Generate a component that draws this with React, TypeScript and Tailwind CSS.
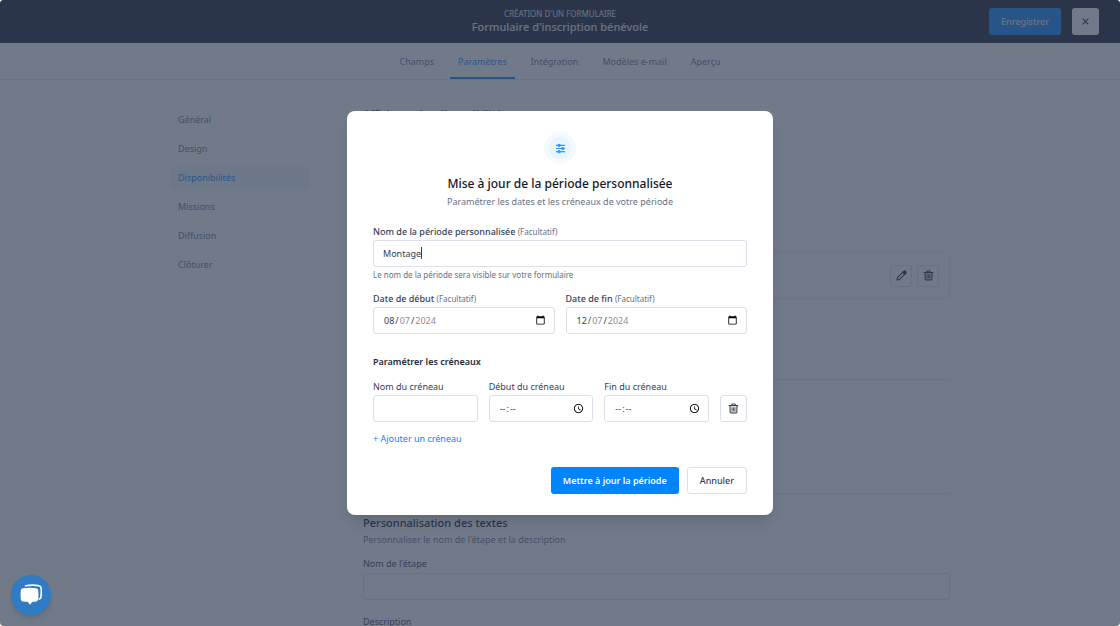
import React, { useState } from 'react';

const tabs = ['Champs', 'Paramètres', 'Intégration', 'Modèles e-mail', 'Aperçu'];
const sections = ['Général', 'Design', 'Disponibilités', 'Missions', 'Diffusion', 'Clôturer'];

const field =
  'h-[27px] w-full min-w-0 rounded-[3px] border border-[#dcdfe8] bg-white pl-[9px] pr-2 text-[9px] text-[#344054] outline-none';
const picker =
  ' [&::-webkit-calendar-picker-indicator]:size-[11px] [&::-webkit-calendar-picker-indicator]:p-0';
const dateField =
  field +
  picker +
  ' [&::-webkit-datetime-edit-day-field]:text-[#8a8d94] [&::-webkit-datetime-edit-year-field]:text-[#8a8d94]';
const timeField = field + picker + ' [&::-webkit-datetime-edit-ampm-field]:hidden';

function TrashIcon() {
  return (
    <svg viewBox="0 0 24 24" className="size-[11px]" fill="none" stroke="currentColor" strokeWidth="2.2" strokeLinecap="round" strokeLinejoin="round" aria-hidden="true">
      <path d="M2.500 5.500h19" />
      <path d="M8 5.500V4C8 2.800 8.700 2 10 2h4c1.300 0 2 .8 2 2v1.500" />
      <path d="M4.500 5.500V19c0 1.700 1.200 3 3 3h9c1.800 0 3-1.300 3-3V5.500" fill="currentColor" fillOpacity="0.2" />
      <path d="M9 10.500v7M12 10.500v7M15 10.500v7" strokeWidth="1.500" />
    </svg>
  );
}

function PencilIcon() {
  return (
    <svg viewBox="0 0 24 24" className="size-[11px]" fill="none" stroke="currentColor" strokeWidth="2.200" strokeLinecap="round" strokeLinejoin="round" aria-hidden="true">
      <path d="M2 22l1.500-6L16.500 3a3.200 3.200 0 0 1 4.500 4.500L8 20.500z" />
      <path d="M14.500 5l4.500 4.500L21 7.500a3.200 3.200 0 0 0-4.500-4.500z" fill="currentColor" />
    </svg>
  );
}

function SlidersIcon() {
  return (
    <svg viewBox="0 0 24 24" className="size-[11px]" fill="none" stroke="currentColor" strokeWidth="2.600" strokeLinecap="round" aria-hidden="true">
      <path d="M3 5h18M3 12h18M3 19h18" />
      <circle cx="9" cy="5" r="2.200" fill="currentColor" />
      <circle cx="17" cy="12" r="2.200" fill="currentColor" />
      <circle cx="9" cy="19" r="2.200" fill="currentColor" />
    </svg>
  );
}

function ChatIcon() {
  return (
    <svg viewBox="0 0 24 24" className="size-6" aria-hidden="true">
      <path d="M6.500 2.800C11 2 16 2 20 2.800c1.200.2 2 1 2.100 2.200.4 3 .3 6.300-.2 9.200-.1.900-.7 1.600-1.600 1.800" fill="none" stroke="#fff" strokeWidth="1.600" strokeLinecap="round" />
      <path d="M3.800 5.200c4-.7 9.400-.7 13.400 0 1.100.2 1.800.9 2 2 .4 3 .4 6.200 0 9.200-.2 1.100-.9 1.800-2 2-1.200.2-2.400.3-3.700.4L11 21.800l-2.500-3c-1.600 0-3.200-.2-4.700-.4-1.100-.2-1.800-.9-2-2-.4-3-.4-6.200 0-9.200.2-1.100.9-1.800 2-2z" fill="#fff" />
    </svg>
  );
}

function Optional() {
  return <span className="text-[8px] font-normal text-[#667085]">(Facultatif)</span>;
}

function PageHeader() {
  return (
    <header className="grid h-[43px] grid-cols-[1fr_auto_1fr] items-center bg-[#11192a] px-[21px]">
      <div className="col-start-2 pb-[2px] text-center text-[#e4e7ec]">
        <p className="text-[8px] leading-3">CRÉATION D'UN FORMULAIRE</p>
        <h1 className="text-[11px] leading-[14px] font-medium">Formulaire d'inscription bénévole</h1>
      </div>
      <div className="flex items-center justify-end gap-[11px]">
        <button type="button" className="h-[27px] rounded-[3px] bg-[#0a84ff] px-3 text-[9px] font-medium text-[#e4e7ec]">
          Enregistrer
        </button>
        <button type="button" aria-label="Fermer" className="flex size-[27px] items-center justify-center rounded-[3px] bg-white text-[#101828]">
          <svg viewBox="0 0 10 10" className="size-[7px]" stroke="currentColor" strokeWidth="1.500" aria-hidden="true">
            <path d="M1 1l8 8M9 1L1 9" />
          </svg>
        </button>
      </div>
    </header>
  );
}

function PageBody() {
  return (
    <div className="mx-auto grid max-w-[780px] grid-cols-[140px_1fr] gap-[53px] pt-[27px]">
      <nav aria-label="Paramètres" className="flex flex-col gap-[5px] pt-px">
        {sections.map((s) => (
          <a
            key={s}
            href="#"
            className={
              s === 'Disponibilités'
                ? 'rounded-[4px] bg-[#f2f9ff] px-2 text-[9px] leading-6 text-[#0a84ff]'
                : 'rounded-[4px] px-2 text-[9px] leading-6 text-[#667085]'
            }
          >
            {s}
          </a>
        ))}
      </nav>
      <main className="min-w-0">
        <h2 className="text-[11px] leading-[14px] font-medium text-[#1d2939]">Affichage des disponibilités</h2>
        <div className="-mx-4 mt-[116px] h-[100px] border-y border-[#f7f8fa] bg-[#fefefe] px-4 pt-[14px]">
          <div className="flex h-[47px] items-center justify-end gap-[5px] rounded-[5px] border border-[#e9ebf0] bg-white px-[10px] text-[#101828]">
            <button type="button" aria-label="Modifier" className="flex size-[22px] items-center justify-center rounded-[3px] border border-[#dcdfe8]">
              <PencilIcon />
            </button>
            <button type="button" aria-label="Supprimer" className="flex size-[22px] items-center justify-center rounded-[3px] border border-[#dcdfe8]">
              <TrashIcon />
            </button>
          </div>
        </div>
        <hr className="mt-[42px] border-[#e4e7ec]" />
        <hr className="mt-[113px] border-[#e4e7ec]" />
        <h2 className="mt-[21px] text-[11px] leading-4 font-medium text-[#101828]">Personnalisation des textes</h2>
        <p className="mt-px text-[9px] leading-4 text-[#667085]">Personnaliser le nom de l'étape et la description</p>
        <label htmlFor="etape" className="mt-2 block text-[9px] leading-4 text-[#344054]">
          Nom de l'étape
        </label>
        <input id="etape" type="text" className={field + ' mt-px'} />
        <label htmlFor="description" className="mt-[14px] block text-[9px] leading-4 text-[#344054]">
          Description
        </label>
        <textarea id="description" className="mt-px h-20 w-full rounded-[3px] border border-[#dcdfe8]" />
      </main>
    </div>
  );
}

function PeriodDialog() {
  const [name, setName] = useState('Montage');
  return (
    <form
      role="dialog"
      aria-modal="true"
      aria-labelledby="dialog-title"
      className="w-full max-w-[426px] rounded-[8px] bg-white px-[26px] py-[21px] text-[9px] text-[#344054] shadow-lg"
    >
      <div className="mx-auto flex size-8 items-center justify-center rounded-full bg-[#f5faff]">
        <div className="flex size-[22px] items-center justify-center rounded-full bg-[#e8f4ff] text-[#2e96ff]">
          <SlidersIcon />
        </div>
      </div>
      <h2 id="dialog-title" className="mt-3 text-center text-[12px] leading-4 font-medium text-[#101828]">
        Mise à jour de la période personnalisée
      </h2>
      <p className="mt-[2px] text-center leading-4 text-[#667085]">Paramétrer les dates et les créneaux de votre période</p>

      <label htmlFor="nom" className="mt-[14px] block leading-4 font-medium">
        Nom de la période personnalisée <Optional />
      </label>
      <div className="relative">
        <input id="nom" type="text" value={name} onChange={(e) => setName(e.target.value)} className={field + ' block'} />
        <span className="absolute top-[7px] left-12 h-3 w-px bg-[#344054]" aria-hidden="true" />
      </div>
      <p className="mt-[2px] text-[8px] leading-3 text-[#667085]">Le nom de la période sera visible sur votre formulaire</p>

      <div className="mt-[10px] grid grid-cols-2 gap-[11px]">
        <div>
          <label htmlFor="debut" className="block leading-4 font-medium">
            Date de début <Optional />
          </label>
          <input id="debut" type="date" defaultValue="2024-08-07" className={dateField} />
        </div>
        <div>
          <label htmlFor="fin" className="block leading-4 font-medium">
            Date de fin <Optional />
          </label>
          <input id="fin" type="date" defaultValue="2024-12-07" className={dateField} />
        </div>
      </div>

      <h3 className="mt-5 leading-4 font-semibold text-[#1d2939]">Paramétrer les créneaux</h3>
      <div className="mt-[9px] grid grid-cols-[1fr_1fr_1fr_27px] items-end gap-[11px]">
        <div>
          <label htmlFor="creneau" className="block leading-4">Nom du créneau</label>
          <input id="creneau" type="text" className={field} />
        </div>
        <div>
          <label htmlFor="creneau-debut" className="block leading-4">Début du créneau</label>
          <input id="creneau-debut" type="time" className={timeField} />
        </div>
        <div>
          <label htmlFor="creneau-fin" className="block leading-4">Fin du créneau</label>
          <input id="creneau-fin" type="time" className={timeField} />
        </div>
        <button type="button" aria-label="Supprimer le créneau" className="flex size-[27px] items-center justify-center rounded-[3px] border border-[#dcdfe8]">
          <TrashIcon />
        </button>
      </div>
      <button type="button" className="mt-[9px] block leading-4 text-[#0a84ff]">
        + Ajouter un créneau
      </button>

      <div className="mt-5 flex justify-end gap-2">
        <button type="submit" className="h-[27px] rounded-[3px] bg-[#0084ff] px-3 font-semibold text-white">
          Mettre à jour la période
        </button>
        <button type="button" className="h-[27px] rounded-[3px] border border-[#dcdfe8] px-3 font-medium">
          Annuler
        </button>
      </div>
    </form>
  );
}

export default function App() {
  return (
    <div className="relative h-screen overflow-hidden rounded-[4px] bg-white font-['Noto_Sans',sans-serif]">
      <PageHeader />
      <nav aria-label="Formulaire" className="flex h-[37px] justify-center gap-2 border-b border-[#e4e7ec] text-[9px] text-[#667085]">
        {tabs.map((t) => (
          <a
            key={t}
            href="#"
            className={
              t === 'Paramètres'
                ? 'h-9 border-b-2 border-[#0a84ff] px-2 pt-px leading-9 text-[#0a84ff]'
                : 'h-9 border-b-2 border-transparent px-2 pt-px leading-9'
            }
          >
            {t}
          </a>
        ))}
      </nav>
      <PageBody />
      <div className="absolute inset-0 flex items-center justify-center bg-[#344157]/70">
        <PeriodDialog />
      </div>
      <button type="button" aria-label="Ouvrir la discussion" className="absolute bottom-[11px] left-[11px] flex size-10 items-center justify-center rounded-full bg-[#2f7bc4] shadow-md">
        <ChatIcon />
      </button>
    </div>
  );
}
